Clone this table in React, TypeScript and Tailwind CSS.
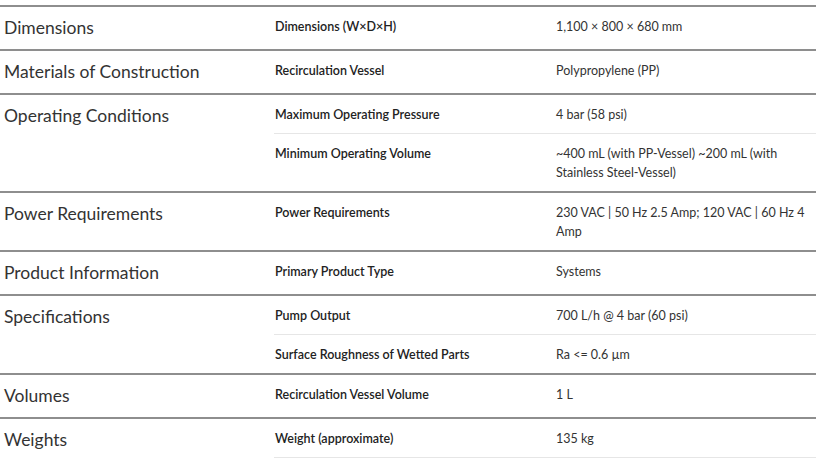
import React from "react";

type Sub = { label: string; value: string };
type Group = { category: string; rows: Sub[] };

const groups: Group[] = [
  { category: "Dimensions", rows: [{ label: "Dimensions (W×D×H)", value: "1,100 × 800 × 680 mm" }] },
  { category: "Materials of Construction", rows: [{ label: "Recirculation Vessel", value: "Polypropylene (PP)" }] },
  {
    category: "Operating Conditions",
    rows: [
      { label: "Maximum Operating Pressure", value: "4 bar (58 psi)" },
      { label: "Minimum Operating Volume", value: "~400 mL (with PP-Vessel) ~200 mL (with Stainless Steel-Vessel)" },
    ],
  },
  {
    category: "Power Requirements",
    rows: [{ label: "Power Requirements", value: "230 VAC | 50 Hz 2.5 Amp; 120 VAC | 60 Hz 4 Amp" }],
  },
  { category: "Product Information", rows: [{ label: "Primary Product Type", value: "Systems" }] },
  {
    category: "Specifications",
    rows: [
      { label: "Pump Output", value: "700 L/h @ 4 bar (60 psi)" },
      { label: "Surface Roughness of Wetted Parts", value: "Ra <= 0.6 µm" },
    ],
  },
  { category: "Volumes", rows: [{ label: "Recirculation Vessel Volume", value: "1 L" }] },
  { category: "Weights", rows: [{ label: "Weight (approximate)", value: "135 kg" }] },
];

export default function App() {
  return (
    <div className="w-[819px] h-[461px] overflow-hidden bg-white pt-[5px]" style={{ fontFamily: "Lato, 'Noto Sans', sans-serif" }}>
      <div className="w-[816px]">
        {groups.map((g, gi) => {
          const last = gi === groups.length - 1;
          return (
            <div key={g.category} className="flex border-t-2 border-[#8e8e8e]">
              <div className="w-[274px] shrink-0 pl-[4px] py-[9px] text-[17.5px] leading-[24px] text-[#333]">
                {g.category}
              </div>
              <div className="flex-1 self-start">
                {g.rows.map((r, ri) => (
                  <div
                    key={r.label}
                    className={
                      "grid grid-cols-[282px_1fr] py-[9.5px] leading-[19px] text-[12.5px] " +
                      (ri > 0 ? "border-t border-[#e6e6e6] " : "") +
                      (last ? "border-b border-[#e6e6e6]" : "")
                    }
                  >
                    <div className="pl-px font-semibold text-[#222]">{r.label}</div>
                    <div className="text-[#333]">{r.value}</div>
                  </div>
                ))}
              </div>
            </div>
          );
        })}
      </div>
    </div>
  );
}
